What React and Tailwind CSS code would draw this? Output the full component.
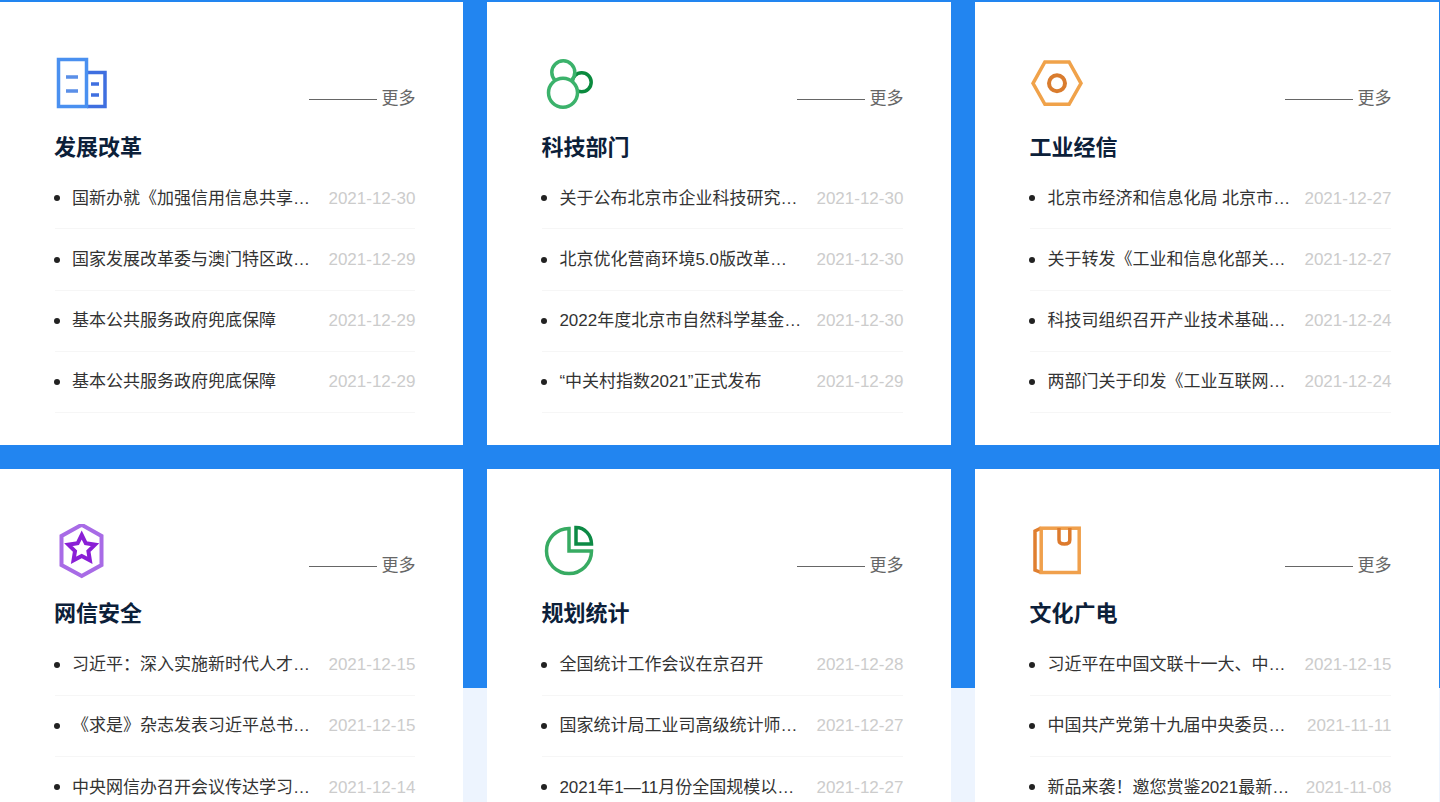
const BuildingIcon = () => (
  <svg width="52" height="52" viewBox="0 0 52 52" fill="none" strokeWidth="3.5">
    <path d="M32 15.5H50V49.5H32" stroke="#3f6fe0" />
    <path d="M36 27H44M36 38H44" stroke="#3f6fe0" />
    <rect x="3.5" y="2.5" width="28" height="47" stroke="#4a90f0" />
    <path d="M11 20H23M11 34H23" stroke="#5a8fe8" />
  </svg>
);

const CirclesIcon = () => (
  <svg width="52" height="52" viewBox="0 0 52 52" fill="#fff" strokeWidth="3.5">
    <circle cx="39.7" cy="25.3" r="9.5" stroke="#0a8a3e" />
    <circle cx="21.3" cy="15.3" r="11.5" stroke="#3bb26b" />
    <circle cx="21" cy="35.7" r="14.5" stroke="#3bb26b" />
  </svg>
);

const NutIcon = () => (
  <svg width="52" height="52" viewBox="0 0 52 52" fill="none" strokeWidth="3.5" className="overflow-visible">
    <path d="M3 26.3L14.9 5H39.1L51 26.3L39.1 47.3H14.9Z" stroke="#f0a24a" />
    <circle cx="27" cy="26.3" r="8" stroke="#d97c2e" strokeWidth="4" />
  </svg>
);

const ShieldIcon = () => (
  <svg width="52" height="56" viewBox="0 0 52 56" fill="none">
    <path d="M26.7 0.8L46.5 12V41L26.7 52L6.5 41V12Z" stroke="#a86be6" strokeWidth="4" />
    <path
      d="M26.7 11L30.8 19.3L40 20.7L33.4 27.2L34.9 36.3L26.7 32L18.5 36.3L20 27.2L13.4 20.7L22.6 19.3Z"
      stroke="#8a1fd6"
      strokeWidth="4"
    />
  </svg>
);

const PieIcon = () => (
  <svg width="52" height="56" viewBox="0 0 52 56" fill="none" strokeWidth="3.5" className="overflow-visible">
    <path d="M27 4.5A22.5 22.5 0 1 0 49.5 27H27Z" stroke="#37ab62" />
    <path d="M34 3.5A15.5 16.5 0 0 1 49.5 20H34Z" stroke="#0d8a45" />
  </svg>
);

const BookIcon = () => (
  <svg width="52" height="56" viewBox="0 0 52 56" fill="none" strokeWidth="3.5">
    <path d="M11 4.2L5 7V46L11 48.5" stroke="#e07f30" />
    <rect x="11.2" y="4.2" width="38" height="44.3" stroke="#f0a04c" />
    <path d="M29 4V16Q29 20 34.4 20Q39.8 20 39.8 16V4" stroke="#dd7a2d" />
  </svg>
);

const sections = [
  {
    title: '发展改革',
    icon: <BuildingIcon />,
    items: [
      ['国新办就《加强信用信息共享步伐中小微企业融资实施方案》举行吹风会', '2021-12-30'],
      ['国家发展改革委与澳门特区政府签署合作协议', '2021-12-29'],
      ['基本公共服务政府兜底保障', '2021-12-29'],
      ['基本公共服务政府兜底保障', '2021-12-29'],
    ],
  },
  {
    title: '科技部门',
    icon: <CirclesIcon />,
    items: [
      ['关于公布北京市企业科技研究开发机构名单的通知', '2021-12-30'],
      ['北京优化营商环境5.0版改革方案正式发布实施', '2021-12-30'],
      ['2022年度北京市自然科学基金项目申报工作启动', '2021-12-30'],
      ['“中关村指数2021”正式发布', '2021-12-29'],
    ],
  },
  {
    title: '工业经信',
    icon: <NutIcon />,
    items: [
      ['北京市经济和信息化局 北京市财政局关于开展工作的通知', '2021-12-27'],
      ['关于转发《工业和信息化部关于开展试点工作的通知》', '2021-12-27'],
      ['科技司组织召开产业技术基础公共服务工作会议', '2021-12-24'],
      ['两部门关于印发《工业互联网创新发展行动计划》', '2021-12-24'],
    ],
  },
  {
    title: '网信安全',
    icon: <ShieldIcon />,
    items: [
      ['习近平：深入实施新时代人才强国战略', '2021-12-15'],
      ['《求是》杂志发表习近平总书记重要文章', '2021-12-15'],
      ['中央网信办召开会议传达学习中央经济工作会议精神', '2021-12-14'],
      ['网络安全审查办法正式公布施行', '2021-12-14'],
    ],
  },
  {
    title: '规划统计',
    icon: <PieIcon />,
    items: [
      ['全国统计工作会议在京召开', '2021-12-28'],
      ['国家统计局工业司高级统计师解读工业生产数据', '2021-12-27'],
      ['2021年1—11月份全国规模以上工业企业利润情况', '2021-12-27'],
      ['2021年全国粮食生产数据公告', '2021-12-06'],
    ],
  },
  {
    title: '文化广电',
    icon: <BookIcon />,
    items: [
      ['习近平在中国文联十一大、中国作协十大开幕式上讲话', '2021-12-15'],
      ['中国共产党第十九届中央委员会第六次全体会议公报', '2021-11-11'],
      ['新品来袭！邀您赏鉴2021最新文化精品节目', '2021-11-08'],
      ['全国广播电视工作会议召开', '2021-11-02'],
    ],
  },
];

const Card = ({ title, icon, items }) => (
  <section className="h-[442.6px] overflow-hidden bg-white pl-[55px] pr-[48px] pt-[55px]">
    <div className="flex h-[52px] items-start justify-between">
      {icon}
      <a className="relative mt-[28.7px] flex h-[26px] items-center text-[17px] text-[#666]">
        <span className="mr-[4px] mt-[1.3px] h-px w-[68px] bg-[#666]" />
        更多
      </a>
    </div>
    <h2 className="ml-[-1px] mt-[22.3px] text-[22px] font-bold leading-[32px] text-[#0c2039]">{title}</h2>
    <ul className="mt-[4.55px]">
      {items.map(([text, date], i) => (
        <li key={i} className="flex h-[61.2px] items-center border-b border-[#f6f6f6] text-[17px]">
          <span className="ml-[-1px] mr-[12px] h-[6px] w-[6px] shrink-0 rounded-full bg-[#222]" />
          <span className="w-[243px] truncate text-[#333]">{text}</span>
          <span className="ml-auto text-[#ccc]">{date}</span>
        </li>
      ))}
    </ul>
  </section>
);

export default function App() {
  return (
    <div className="h-[802px] overflow-hidden bg-[linear-gradient(#2285f0_688px,#edf4fe_688px)] pt-[2.4px] font-['Liberation_Sans','Noto_Sans_CJK_SC',sans-serif]">
      <div className="grid grid-cols-[463.4px_464px_464px] gap-6">
        {sections.map((s) => (
          <Card key={s.title} {...s} />
        ))}
      </div>
    </div>
  );
}
